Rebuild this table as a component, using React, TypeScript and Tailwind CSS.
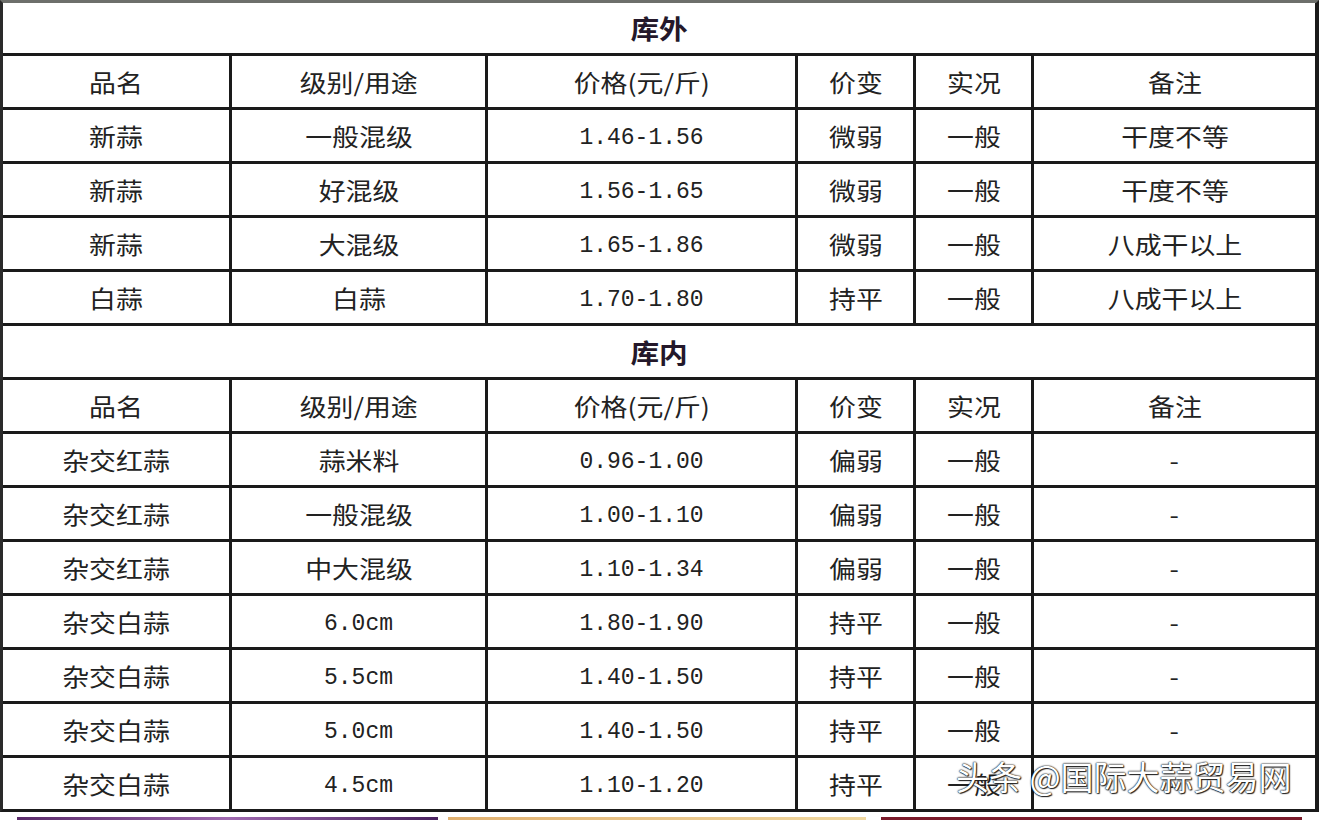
import React from 'react';

const cjk = '[font-family:"Noto_Sans_CJK_SC","Noto_Sans",sans-serif]';

type Row = [string, string, string, string, string, string];

const header: Row = ['品名', '级别/用途', '价格(元/斤)', '价变', '实况', '备注'];

const outside: Row[] = [
  ['新蒜', '一般混级', '1.46-1.56', '微弱', '一般', '干度不等'],
  ['新蒜', '好混级', '1.56-1.65', '微弱', '一般', '干度不等'],
  ['新蒜', '大混级', '1.65-1.86', '微弱', '一般', '八成干以上'],
  ['白蒜', '白蒜', '1.70-1.80', '持平', '一般', '八成干以上'],
];

const inside: Row[] = [
  ['杂交红蒜', '蒜米料', '0.96-1.00', '偏弱', '一般', '-'],
  ['杂交红蒜', '一般混级', '1.00-1.10', '偏弱', '一般', '-'],
  ['杂交红蒜', '中大混级', '1.10-1.34', '偏弱', '一般', '-'],
  ['杂交白蒜', '6.0cm', '1.80-1.90', '持平', '一般', '-'],
  ['杂交白蒜', '5.5cm', '1.40-1.50', '持平', '一般', '-'],
  ['杂交白蒜', '5.0cm', '1.40-1.50', '持平', '一般', '-'],
  ['杂交白蒜', '4.5cm', '1.10-1.20', '持平', '一般', '-'],
];

// digits & latin in a Courier-like mono, Chinese in the CJK sans
function CellText({ text }: { text: string }) {
  const isMono = /^[0-9.\-]+(cm)?$/.test(text) && text !== '-';
  if (isMono) {
    return (
      <span className='inline-block translate-y-[3px] [font-family:"Liberation_Mono",monospace] text-[23px] text-[#222]'>
        {text}
      </span>
    );
  }
  return (
    <span className={`inline-block ${cjk} text-[24px] text-[#222] scale-x-112`}>{text}</span>
  );
}

function DataRow({ row }: { row: Row }) {
  return (
    <>
      {row.map((c, i) => (
        <div key={i} className="bg-white h-[51px] flex items-center justify-center leading-none">
          <CellText text={c} />
        </div>
      ))}
    </>
  );
}

function TitleRow({ title, tall }: { title: string; tall?: boolean }) {
  return (
    <div
      className={`col-span-6 bg-white flex items-center justify-center leading-none ${
        tall ? 'h-[50px]' : 'h-[51px]'
      }`}
    >
      <span className={`inline-block ${cjk} font-bold text-[26px] text-[#24182a] scale-x-110`}>{title}</span>
    </div>
  );
}

export default function App() {
  return (
    <div className="w-[1320px] h-[820px] bg-white overflow-hidden flex flex-col">
      <div className="relative w-[1319px] border-t-[3px] border-t-[#6d6f6b] border-l-[3px] border-l-[#2a2a2a] border-r-[3px] border-r-[#1a1a1a] border-b-[3px] border-b-[#1a1a1a] bg-[#1a1a1a]">
        <div className="grid grid-cols-[226px_253px_307px_115px_115px_281px] gap-[3px]">
          <TitleRow title="库外" tall />
          <DataRow row={header} />
          {outside.map((r, i) => (
            <DataRow key={'o' + i} row={r} />
          ))}
          <TitleRow title="库内" />
          <DataRow row={header} />
          {inside.map((r, i) => (
            <DataRow key={'i' + i} row={r} />
          ))}
        </div>

        {/* watermark */}
        <div
          className={`absolute left-[953px] top-[757px] ${cjk} text-[33px] leading-none text-white whitespace-nowrap [text-shadow:0_0_1px_#000,0_0_2px_#000,1px_1px_1px_#333]`}
        >
          头条 @国际大蒜贸易网
        </div>
      </div>

      <div className="mt-[5px] flex h-[3px]">
        <div className="ml-[17px] w-[421px] bg-gradient-to-r from-[#5a2a6a] via-[#a06ab0] to-[#4a2260]" />
        <div className="ml-[10px] w-[418px] bg-gradient-to-r from-[#e0b070] to-[#f0d8a0]" />
        <div className="ml-[15px] w-[421px] bg-[#7a1a2a]" />
      </div>
    </div>
  );
}
